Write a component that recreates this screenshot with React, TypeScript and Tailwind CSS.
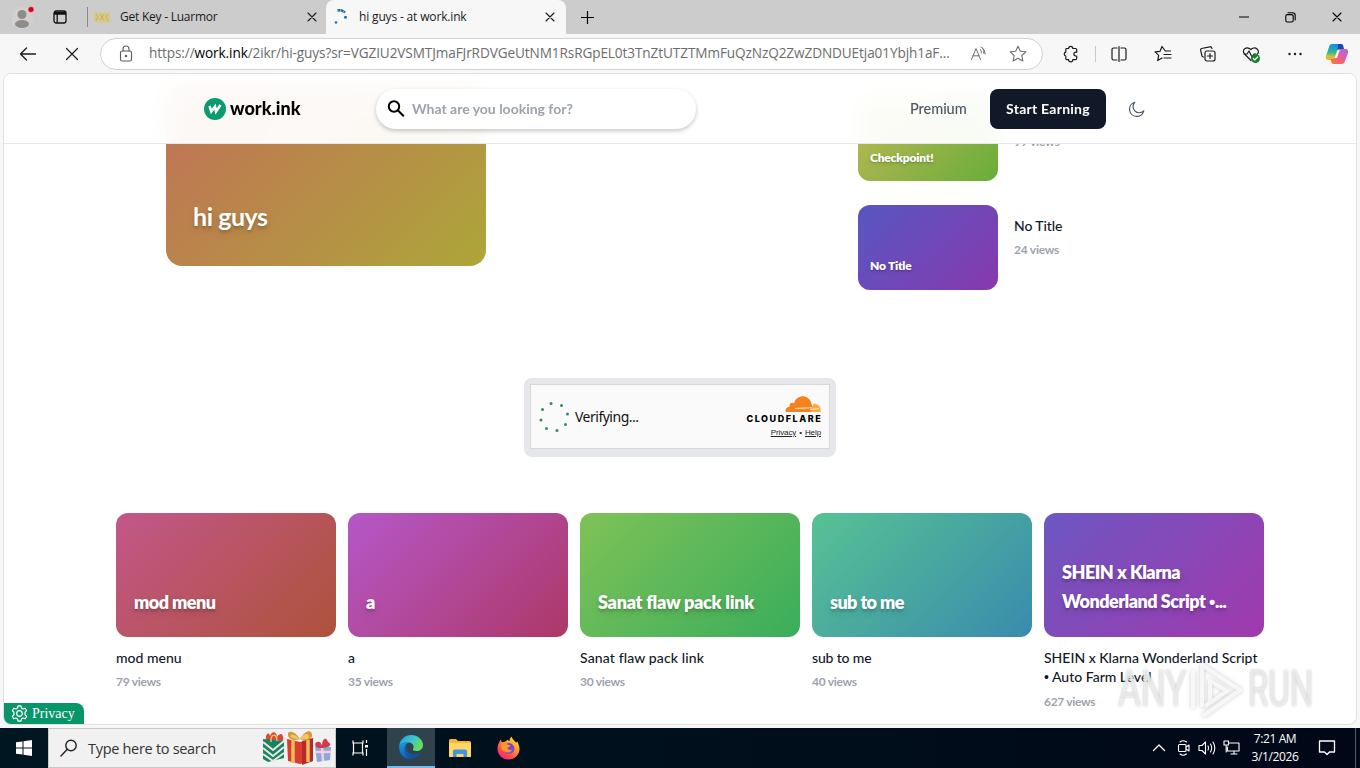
import type { ReactNode, SVGProps } from 'react';

type CardData = {
  title: string;
  heroTitle: string;
  views: string;
  gradient: string;
  heroClass: string;
  titleClass: string;
};

const CARDS: CardData[] = [
  { title: 'mod menu', heroTitle: 'mod menu', views: '79 views', gradient: 'bg-linear-[135deg,#c2578a,#ae5239]', heroClass: 'tracking-[-0.55px]', titleClass: 'tracking-normal' },
  { title: 'a', heroTitle: 'a', views: '35 views', gradient: 'bg-linear-[135deg,#b557c9,#ad3867]', heroClass: 'tracking-normal', titleClass: 'tracking-normal' },
  { title: 'Sanat flaw pack link', heroTitle: 'Sanat flaw pack link', views: '30 views', gradient: 'bg-linear-[135deg,#7fc257,#39ad5c]', heroClass: 'tracking-[-0.25px]', titleClass: 'tracking-[0.13px]' },
  { title: 'sub to me', heroTitle: 'sub to me', views: '40 views', gradient: 'bg-linear-[135deg,#57c294,#398bad]', heroClass: 'tracking-[-0.6px]', titleClass: 'tracking-[-0.15px]' },
  { title: 'SHEIN x Klarna Wonderland Script • Auto Farm Level', heroTitle: 'SHEIN x Klarna Wonderland Script •...', views: '627 views', gradient: 'bg-linear-[135deg,#6d57c2,#a139ad]', heroClass: 'tracking-[-0.5px]', titleClass: 'tracking-normal' },
];

function Icon({ children, ...props }: SVGProps<SVGSVGElement> & { children: ReactNode }) {
  return (
    <svg width="20" height="20" viewBox="0 0 20 20" fill="none" stroke="currentColor" strokeWidth="1.1" strokeLinecap="round" strokeLinejoin="round" {...props}>
      {children}
    </svg>
  );
}

function CloseIcon() {
  return (
    <Icon width="10" height="10" viewBox="0 0 10 10" className="shrink-0">
      <path d="M1 1l8 8M9 1L1 9" />
    </Icon>
  );
}

function TabStrip() {
  return (
    <div className="flex h-[34px] items-stretch bg-[#cccccc] text-[12px] text-[#1a1a1a]">
      <div className="flex w-[87px] items-center pl-[12px]">
        <svg width="24" height="30" viewBox="0 0 24 30">
          <circle cx="10" cy="16" r="11" fill="#d3d0ce" />
          <circle cx="10" cy="12.500" r="4.500" fill="#8f8b88" />
          <ellipse cx="10" cy="22" rx="7" ry="4" fill="#8f8b88" />
          <circle cx="19" cy="7.500" r="3" fill="#d3041c" stroke="#e8d0d0" strokeWidth=".6" />
        </svg>
        <svg width="14" height="14" viewBox="0 0 14 14" className="ml-[17px]" fill="none" stroke="#111" strokeWidth="1.3">
          <rect x="1" y="1" width="12" height="12" rx="2.2" />
          <path d="M1 2.500h12M1 4h12M4.200 4v9" />
        </svg>
      </div>
      <div className="flex w-[239px] items-center">
        <span className="h-5 w-px bg-[#8a8a8a]" />
        <svg width="16" height="16" viewBox="0 0 16 16" className="ml-[6px]">
          <path d="M0 2l4 2 1-1 3 1 3-1 1 1 4-2v11l-4 1-2-1-2 1-2-1-2 1-4-2z" fill="#d8c87a" opacity=".8" />
          <path d="M2 5l2 3-2 4M6 5l4 6M10 5l-4 6M14 5l-2 3 2 4" stroke="#bda94f" fill="none" opacity=".7" />
        </svg>
        <span className="ml-[10px] w-[187px] tracking-[-0.240px]">Get Key - Luarmor</span>
        <CloseIcon />
      </div>
      <div className="flex w-[240px] items-center rounded-t-lg bg-[#f7f7f7] pl-[8px]">
        <svg width="16" height="16" viewBox="0 0 16 16" fill="#1d6f9f">
          <circle cx="2" cy="13.500" r="1.300" />
          <circle cx="11.500" cy="8.200" r="1.500" />
          <path d="M3.500 1.500a8 8 0 0 1 7.500 2" stroke="#1d6f9f" strokeWidth="2.500" fill="none" strokeDasharray="2.800 .4" />
        </svg>
        <span className="ml-[9px] w-[186px] tracking-[-0.160px]">hi guys - at work.ink</span>
        <CloseIcon />
      </div>
      <div className="flex flex-1 items-center justify-between pr-[18px] pl-[15px] text-black">
        <Icon width="13" height="13" viewBox="0 0 13 13" strokeWidth="1.2">
          <path d="M6.500 .5v12M.5 6.500h12" />
        </Icon>
        <div className="flex items-center gap-[36px]">
          <Icon width="10" height="10" viewBox="0 0 10 10"><path d="M0 5h10" /></Icon>
          <Icon width="11" height="11" viewBox="0 0 11 11">
            <rect x=".8" y="2.600" width="7.400" height="7.400" rx="1.500" />
            <path d="M3 .8h4.500a2.700 2.700 0 0 1 2.700 2.700V8" />
          </Icon>
          <CloseIcon />
        </div>
      </div>
    </div>
  );
}

function AddressBar() {
  return (
    <div className="flex h-[39px] items-center bg-[#f7f7f7] text-[#1b1b1b]">
      <Icon className="ml-[18px] shrink-0" strokeWidth="1.3"><path d="M17.500 10H2.500M8.500 4L2.500 10l6 6" /></Icon>
      <Icon className="ml-[24px] shrink-0" strokeWidth="1.2"><path d="M4.500 4.500l11 11M15.500 4.500l-11 11" /></Icon>
      <div className="ml-[18px] flex h-[32px] w-[943px] items-center rounded-full border border-[#d2d2d2] bg-white text-[#6d6d6d]">
        <Icon className="ml-[15px] shrink-0" stroke="#5c5c5c">
          <rect x="4.500" y="7" width="11" height="10" rx="1.500" />
          <path d="M7 7V5a3 3 0 0 1 6 0v2" />
          <circle cx="10" cy="12" r=".7" fill="#5c5c5c" />
        </Icon>
        <span className="ml-[13px] w-[804px] text-[13.600px] tracking-[-0.100px] whitespace-nowrap">
          https://<span className="text-black">work.ink</span>/2ikr/hi-guys?sr=VGZIU2VSMTJmaFJrRDVGeUtNM1RsRGpEL0t3TnZtUTZTMmFuQzNzQ2ZwZDNDUEtja01Ybjh1aF...
        </span>
        <Icon className="ml-[16px] shrink-0" strokeWidth="1">
          <path d="M2.500 15.500L7 4.500l4.500 11M4 11.800h6M11.500 5.500q1.200 1.500.8 3.500M13.500 3.800q2 2.500 1.300 5.500M12.400 3q4 3 3.800 7" />
        </Icon>
        <Icon className="ml-[19px] shrink-0">
          <path d="M10 2.200l2.300 5 5.500.6-4 3.700 1.100 5.500-4.900-2.700-4.900 2.700 1.100-5.500-4-3.700 5.500-.6z" />
        </Icon>
      </div>
      <Icon className="ml-[18px] shrink-0" strokeWidth="1.200">
        <path d="M5 4.500h2.600a2 2 0 0 1 4.200 0h2.700q1.200 0 1.200 1.200v2.500h-.9a1.900 1.900 0 0 0 0 3.800h.9v2.500q0 1.200-1.200 1.200h-2.700a2 2 0 0 1-4.200 0H6q-1.200 0-1.200-1.200V12a2 2 0 0 1 0-3.900V5.700Q4.800 4.500 6 4.500z" />
      </Icon>
      <span className="ml-[14px] h-[16px] w-px bg-[#c8c8c8]" />
      <Icon className="ml-[13px] shrink-0" strokeWidth="1.200">
        <path d="M8 4H4.500Q3 4 3 5.500v9Q3 16 4.500 16H8M12 4h3.500Q17 4 17 5.500v9q0 1.500-1.500 1.500H12M10 2.500v15" />
      </Icon>
      <Icon className="ml-[24px] shrink-0" strokeWidth="1.200">
        <path d="M17.500 7h-5.200L9 2.500 7 7.300l-5 .6 3.700 3.500-1 5.200L9 14M11 10.500h7M11 14h7" />
      </Icon>
      <Icon className="ml-[25px] shrink-0" strokeWidth="1.200">
        <rect x="7" y="7" width="10" height="10" rx="2" />
        <path d="M12 9.500v5M9.500 12h5M14 4.500l-.7-1.100Q13 2.500 11.800 2.800L3.500 4.500Q2.200 5 2.600 6.200L4 12q.5 1 1.500 1" />
      </Icon>
      <Icon className="ml-[23px] shrink-0" strokeWidth="1.200">
        <path d="M10 16.500L3.500 10C0 6 5.500 1.500 10 5.500c4.500-4 9.500 1 6.500 4.500M3 10h3l2-3 3 6 2-3h2" />
        <circle cx="14.500" cy="14.500" r="4.500" fill="#16832b" stroke="none" />
        <path d="M12.300 14.500l1.500 1.500 2.800-3" stroke="#fff" />
      </Icon>
      <Icon className="ml-[24px] shrink-0" fill="currentColor" stroke="none">
        <circle cx="4.500" cy="10" r="1.200" /><circle cx="10" cy="10" r="1.200" /><circle cx="15.500" cy="10" r="1.200" />
      </Icon>
      <svg width="24" height="22" viewBox="0 0 24 22" className="ml-[20px] shrink-0">
        <defs>
          <linearGradient id="cpA" x1="0.300" y1="0" x2=".3" y2="1"><stop stopColor="#158ee8" /><stop offset=".5" stopColor="#2db59b" /><stop offset=".8" stopColor="#d8c32c" /><stop offset="1" stopColor="#f7a530" /></linearGradient>
          <linearGradient id="cpB" x1="1" y1="0" x2=".3" y2="1"><stop stopColor="#a06af0" /><stop offset=".5" stopColor="#e45ba5" /><stop offset="1" stopColor="#fb7046" /></linearGradient>
        </defs>
        <path d="M7 1h8c2 0 2.500 1 3 3l.5 2h-3c-2 0-2.500 1-3 3l-2 6c-.5 1.500-1 2-3 2H4c-3 0-3.500-2-3-4L4 4c.5-2 1.500-3 3-3z" fill="url(#cpA)" />
        <path d="M13 1h3c2 0 2 1 2.500 3l.5 2h-4c-2 0-2 .5-2.500 2z" fill="#1747b8" />
        <path d="M17 21H9c-2 0-2.500-1-3-3l-.3-2H8c2 0 2.500-1 3-3l2-5c.5-1.500 1-2 3-2h4c3 0 3.500 2 3 4l-3 8c-.5 2-1.500 3-3 3z" fill="url(#cpB)" />
        <path d="M12.500 7h2.300l-2.800 8H9.500z" fill="#f7f7f7" />
      </svg>
    </div>
  );
}

function SiteHeader() {
  return (
    <header className="absolute inset-x-0 top-0 z-10 flex h-[70px] items-center border-b border-[#e5e7eb] bg-white/95 backdrop-blur-md">
      <svg width="22" height="22" viewBox="0 0 22 22" className="ml-[200px]">
        <circle cx="11" cy="11" r="11" fill="#099a70" />
        <path d="M5.500 8l1.800 5.500L11 8.500l1 5L16.500 7" fill="none" stroke="#fff" strokeWidth="2.500" />
      </svg>
      <span className="ml-[4px] w-[74px] text-[18px] font-black tracking-[0.020px] whitespace-nowrap text-black">work.ink</span>
      <div className="ml-[72px] flex h-[40px] w-[320px] items-center rounded-full bg-white pl-[11px] shadow-[0_2px_4px_rgba(0,0,0,0.22)]">
        <Icon width="18" height="18" viewBox="0 0 18 18" stroke="#000" strokeWidth="2" strokeLinecap="butt">
          <circle cx="7" cy="6.500" r="5.200" /><path d="M10.800 10.300l6 6" />
        </Icon>
        <span className="ml-[7px] text-[14px] font-bold tracking-[-0.010px] whitespace-nowrap text-[#9ca3af]">What are you looking for?</span>
      </div>
      <span className="ml-[214px] w-[80px] text-[14.500px] font-medium tracking-[-0.050px] text-[#4b5563]">Premium</span>
      <div className="flex h-[40px] w-[116px] items-center justify-center rounded-lg bg-[#111827] text-[14px] font-bold tracking-[0.250px] whitespace-nowrap text-white">Start Earning</div>
      <Icon width="18" height="18" viewBox="0 0 20 20" className="ml-[22px]" stroke="#4b5563" strokeWidth="1.300">
        <path d="M7.500 2.500a8 8 0 1 0 10 9.500A6.500 6.500 0 0 1 7.500 2.500z" />
      </Icon>
    </header>
  );
}

function Feature() {
  return (
    <div className="flex h-[304px] pl-[162px]">
      <div className="mt-[12px] flex h-[180px] w-[320px] items-end rounded-2xl bg-linear-[135deg,#c27057,#ada639] px-[27px] pb-[32px]">
        <span className="text-[25px] leading-9 font-bold tracking-[-0.450px] text-white text-shadow-lg">hi guys</span>
      </div>
      <div className="ml-[372px] flex w-[350px] flex-col gap-[24px] pt-[23px]">
        <div className="flex">
          <div className="flex h-[84px] w-[140px] items-end rounded-xl bg-linear-[135deg,#c2b857,#68ad39] px-[12px] pb-[15px]">
            <span className="text-[12px] leading-4 font-extrabold tracking-[-0.200px] text-white text-shadow-md">Checkpoint!</span>
          </div>
          <div className="pt-[37px] pl-[16px] text-[12px] leading-4 font-bold tracking-[-0.200px] text-[#9ca3af]">99 views</div>
        </div>
        <div className="flex">
          <div className="flex h-[85px] w-[140px] items-end rounded-xl bg-linear-[135deg,#5757c2,#8739ad] px-[12px] pb-[16px]">
            <span className="text-[12px] leading-4 font-extrabold tracking-[-0.200px] text-white text-shadow-md">No Title</span>
          </div>
          <div className="flex flex-col gap-[7px] pt-[11px] pl-[16px]">
            <span className="text-[14px] leading-[19px] font-medium tracking-[-0.100px] text-[#111827]">No Title</span>
            <span className="text-[12px] leading-4 font-bold tracking-[-0.250px] text-[#9ca3af]">24 views</span>
          </div>
        </div>
      </div>
    </div>
  );
}

function Cloudflare() {
  return (
    <div className="mx-auto flex h-[79px] w-[312px] items-start justify-center rounded-lg bg-[#e5e7eb] pt-[6px] font-['Noto_Sans',sans-serif]">
      <div className="flex h-[65px] w-[300px] items-center border border-[#d8d8d8] bg-[#fafafa] pr-[8px] pl-[8px]">
        <svg width="32" height="32" viewBox="0 0 32 32" fill="#2d8f61">
          <circle cx="12" cy="2.500" r="1.500" /><circle cx="22.500" cy="4.500" r="1.500" /><circle cx="28.500" cy="13" r="1.500" /><circle cx="26.500" cy="23.500" r="1.500" />
          <circle cx="18" cy="29.500" r="1.500" /><circle cx="7.500" cy="27.500" r="1.500" /><circle cx="2" cy="19" r="1.500" /><circle cx="3.500" cy="8.500" r="1.500" />
        </svg>
        <span className="ml-[4px] text-[14px] tracking-[-0.500px] text-[#111]">Verifying...</span>
        <div className="ml-auto flex flex-col items-end">
          <svg width="36" height="17" viewBox="0 0 36 17">
            <path d="M26 16h9.500c1-5-2-8.500-7-8.300z" fill="#fbad41" />
            <path d="M.5 16c-.5-3 1-5 4-5.300-.5-3 2-4.700 4.500-3.500C10.500 2 15 0 19 .3c4 .8 7 3.700 7.500 7.700 1.500 2 1.300 3 0 8z" fill="#f6821f" />
            <path d="M10 12.500l17-.8M25 13.500l9-1" stroke="#fff" strokeWidth=".8" />
          </svg>
          <span className="-mr-[1.200px] mt-px font-['Inter',sans-serif] text-[9px] leading-[10px] font-extrabold tracking-[1.550px] text-black">CLOUDFLARE</span>
          <div className="mt-[3px] flex gap-[3px] font-['Liberation_Sans',sans-serif] text-[8px] leading-[11px] tracking-[-0.100px] text-[#232323]">
            <span className="underline">Privacy</span><span>•</span><span className="underline">Help</span>
          </div>
        </div>
      </div>
    </div>
  );
}

// Lato's bullet is oversized, so it is set in a lighter face
function BulletText({ text }: { text: string }) {
  const parts = text.split('•');
  return (
    <>
      {parts.map((part, index) => (
        <span key={index}>
          {index > 0 && <span className="font-['Liberation_Sans',sans-serif]">•</span>}
          {part}
        </span>
      ))}
    </>
  );
}

function Card({ card }: { card: CardData }) {
  return (
    <div className="w-[220px]">
      <div className={`flex h-[124px] items-end rounded-xl px-[18px] pb-[20px] ${card.gradient}`}>
        <span className={`text-[18px] leading-[29px] font-extrabold text-white text-shadow-lg ${card.heroClass}`}><BulletText text={card.heroTitle} /></span>
      </div>
      <div className={`mt-[11px] text-[14px] leading-[19px] font-medium text-[#111827] ${card.titleClass}`}><BulletText text={card.title} /></div>
      <div className="mt-[7px] text-[12px] leading-4 font-bold tracking-[-0.300px] text-[#9ca3af]">{card.views}</div>
    </div>
  );
}

function Watermark() {
  return (
    <div className="pointer-events-none absolute top-[583px] left-[1114px] flex h-[64px] items-center font-['Roboto',sans-serif] text-[50px] leading-none font-normal text-white/60 [text-shadow:0_0_3px_#bbb]">
      <span className="w-[68px] origin-left scale-x-[.7]">ANY</span>
      <svg width="62" height="64" viewBox="0 0 62 64" className="overflow-visible drop-shadow-[0_0_2px_#bbb]">
        <path d="M16 50V8L54 33 17 59M7 51V14M24 47V24l17 10-22 15" fill="none" stroke="#fff" strokeOpacity=".75" strokeWidth="4" strokeLinejoin="round" />
      </svg>
      <span className="w-[66px] origin-left scale-x-[.66]">RUN</span>
    </div>
  );
}

function Taskbar() {
  return (
    <div className="flex h-[40px] items-center bg-linear-to-r from-[#001620] to-[#000818] text-white">
      <div className="flex w-[48px] justify-center">
        <svg width="16" height="16" viewBox="0 0 16 16" fill="#fff"><path d="M0 2.300l6.500-.9v6.100H0zM7.500 1.200L16 0v7.500H7.500zM0 8.500h6.500v6.100L0 13.700zM7.500 8.500H16V16l-8.500-1.200z" /></svg>
      </div>
      <div className="flex h-full w-[288px] items-center border border-[#c9c9c9] bg-[#f1f1f1] pl-[11px] text-[#333]">
        <Icon width="18" height="18" viewBox="0 0 18 18" stroke="#222" strokeWidth="1.400"><circle cx="11" cy="6.500" r="5.200" /><path d="M7.300 10.200L1 17" /></Icon>
        <span className="mt-[2px] ml-[10px] w-[175px] text-[14.500px] tracking-[-0.300px]">Type here to search</span>
        <Gifts />
      </div>
      <div className="flex w-[51px] justify-center pr-[2px]">
        <svg width="17" height="16" viewBox="0 0 17 16" fill="none" stroke="#fff" strokeWidth="1.200"><path d="M1 .5v2.500h10V.5M1 15.500V13h10v2.500M1.500 3v10M10.500 3v10M14.500 0v3M14.500 9v7" /><path d="M13 5h3v2.500h-3z" fill="#fff" stroke="none" /></svg>
      </div>
      <div className="flex h-full w-[48px] items-center justify-center border-b-2 border-[#76b9ed] bg-[#30424b]">
        <svg width="24" height="24" viewBox="0 0 24 24">
          <defs>
            <linearGradient id="edA" x1="0" y1="0" x2="1" y2=".5"><stop stopColor="#1899dd" /><stop offset=".5" stopColor="#36c3d8" /><stop offset="1" stopColor="#66df58" /></linearGradient>
            <linearGradient id="edB" x1="0" y1="0" x2=".5" y2="1"><stop stopColor="#1b9de2" /><stop offset="1" stopColor="#0d56b3" /></linearGradient>
          </defs>
          <path d="M.2 11C1 4 6 0 12 0c7 0 12 5 12 10 0 4-3 6-6.500 6-3 0-4-1-3.500-2 1.500-2 .5-6-4-6.500C5.500 7 2 8 .2 11z" fill="url(#edA)" />
          <path d="M.2 11C2 7.500 6 6.500 10 7.500 7 8.500 6 12 7.500 15.500 9.500 20 16 21 21.500 18 16 26 5 25.500 1.500 18 .2 15.500 0 13 .2 11z" fill="url(#edB)" />
          <path d="M10 7.500c-3 2-3.500 5-1.500 8.500 3 4 8 4 13 2 .8-.4 1 0 .6.600C19 23 14 25 10 23c-5-3-6-10-3-14z" fill="#124e9d" opacity=".65" />
        </svg>
      </div>
      <div className="flex w-[49px] justify-center">
        <svg width="22" height="19" viewBox="0 0 22 19"><path d="M0 1.500Q0 0 1.500 0H7l2 2h11.500Q22 2 22 3.500V18H0z" fill="#f5b82e" /><path d="M0 4h22v14H0z" fill="#ffd766" /><path d="M4 18v-6q0-1.500 1.500-1.500h11Q18 10.500 18 12v6h-3.500v-3h-7v3z" fill="#3f96d8" /></svg>
      </div>
      <div className="flex w-[49px] justify-center">
        <svg width="23" height="24" viewBox="0 0 24 24">
          <defs><linearGradient id="ffA" x1=".9" y1="0" x2=".2" y2="1"><stop stopColor="#ffe84a" /><stop offset=".4" stopColor="#ff9b26" /><stop offset=".75" stopColor="#ff4550" /><stop offset="1" stopColor="#e62491" /></linearGradient></defs>
          <path d="M4 3l1 3 3-.5C10 5 10 4 11 3.500L13 5c0-2 1-4 2.500-5 0 3 3 4 4.500 6.500L21 5c1 2 2.500 5 2.500 8C23.500 19 18.500 24 12 24S.5 19 .5 13C.5 9 2 6 4 3z" fill="url(#ffA)" />
          <circle cx="12.500" cy="12.500" r="5.600" fill="#7247d8" />
          <path d="M5 7c3-1 5 0 6 1.500l3 .5c0 2-3 2-3 3 0 2 3 3 5 1-1 3-4 5-8 3C5 15 3 11 5 7z" fill="#ff9828" />
        </svg>
      </div>
      <div className="ml-auto flex h-full items-center">
        <Icon width="14" height="14" viewBox="0 0 14 14" strokeWidth="1.300"><path d="M1.500 9.500L7 4l5.500 5.500" /></Icon>
        <Icon width="14" height="18" viewBox="0 0 14 18" className="ml-[11px]"><rect x="1.500" y="5.500" width="7.500" height="7" rx="1" /><path d="M9 8l3-2v6l-3-2M3 3q3-2.500 6.500 0M3 15q3 2.500 6.500 0" /></Icon>
        <Icon width="18" height="16" viewBox="0 0 18 16" className="ml-[7px]"><path d="M1 5.500h3L7.500 2v12L4 10.500H1zM10 6q1 2 0 4M12.500 4q2.300 4 0 8M15 2q3.600 6 0 12" /></Icon>
        <Icon width="17" height="16" viewBox="0 0 17 16" className="ml-[7px]"><path d="M6 3h10v8H4.500V7M8 14h6M11 11v3M1 1h4.500v4H1zM3.200 5v7" /></Icon>
        <div className="ml-[9px] w-[52px] text-center text-[12px] leading-[18px] tracking-[-0.400px] whitespace-nowrap">
          <div>7:21 AM</div><div>3/1/2026</div>
        </div>
        <Icon width="18" height="18" viewBox="0 0 18 18" className="ml-[17px]" strokeWidth="1.300"><path d="M1.500 2h15v11h-5L9 15.500 6.500 13h-5z" /></Icon>
        <span className="ml-[19px] h-full w-px bg-[#535b65]" />
        <span className="w-[4px]" />
      </div>
    </div>
  );
}

function Gifts() {
  return (
    <svg width="69" height="36" viewBox="0 0 69 36" className="shrink-0">
      <path d="M3 10C2 4 6 1 7 6c3-7 7-3 7 1 4-6 7-2 6 4z" fill="#d84835" />
      <path d="M0 9l21 2v17L5 32 0 29z" fill="#168464" />
      <path d="M0 12l10 8 11-9M0 18l10 8 11-9M0 24l10 7 11-8" fill="none" stroke="#eee7db" strokeWidth="2" />
      <path d="M8 12c-1-9 6-9 6-1" fill="none" stroke="#e6c06a" strokeWidth="1.500" />
      <path d="M24 9l13 3 13-3v22l-13 3-12-3z" fill="#d93c30" />
      <path d="M39 11l11-3v23l-11 4z" fill="#ba282b" />
      <path d="M30 10v23M45 10v22" stroke="#efbd58" strokeWidth="3.500" />
      <path d="M37 9C26 13 23 4 26 2q5-2 11 7c6-10 11-9 12-5s-4 9-12 5z" fill="#d79a35" />
      <path d="M36 9C30 9 26 7 28 5q4-1 8 4c5-6 9-6 10-3s-4 4-10 3z" fill="#f0c56a" />
      <path d="M52 16l16 1-1 13-13 2z" fill="#8da5dd" /><path d="M52 22h16M59 17l1 14" stroke="#f2d0dc" strokeWidth="2.500" />
      <path d="M60 18c-9 1-9-5-6-6q4-1 5 4c0-9 5-9 6-4 4 2 3 5-5 6z" fill="#cf3d4a" />
    </svg>
  );
}

export default function App() {
  return (
    <div className="flex h-[768px] w-[1360px] flex-col overflow-hidden bg-[#f7f7f7] font-['Open_Sans',sans-serif]">
      <TabStrip />
      <AddressBar />
      <div className="relative mx-[3px] h-[652px] overflow-hidden rounded-lg border border-[#e0e0e0] bg-white font-['Lato',sans-serif]">
        <SiteHeader />
        <Feature />
        <Cloudflare />
        <div className="mt-[56px] flex gap-[12px] pl-[112px]">
          {CARDS.map((card) => <Card key={card.title} card={card} />)}
        </div>
        <Watermark />
        <div className="absolute bottom-0 left-0 flex h-[21px] w-[80px] items-center rounded-tr-lg bg-[#079669] pl-[7px] font-['Liberation_Serif',serif] text-[14px] text-white">
          <Icon width="17" height="17" viewBox="0 0 20 20" strokeWidth="1.400">
            <path d="M8.300 1h3.400l.5 2.500 2 1.200 2.500-.9 1.700 3-1.900 1.700v3l1.900 1.700-1.700 3-2.500-.9-2 1.200-.5 2.500H8.300l-.5-2.500-2-1.200-2.500.9-1.700-3 1.900-1.700v-3L1.600 6.800l1.700-3 2.500.9 2-1.200z" /><circle cx="10" cy="10" r="3.300" />
          </Icon>
          <span className="ml-[4px]">Privacy</span>
        </div>
      </div>
      <div className="h-[3px]" />
      <Taskbar />
    </div>
  );
}
